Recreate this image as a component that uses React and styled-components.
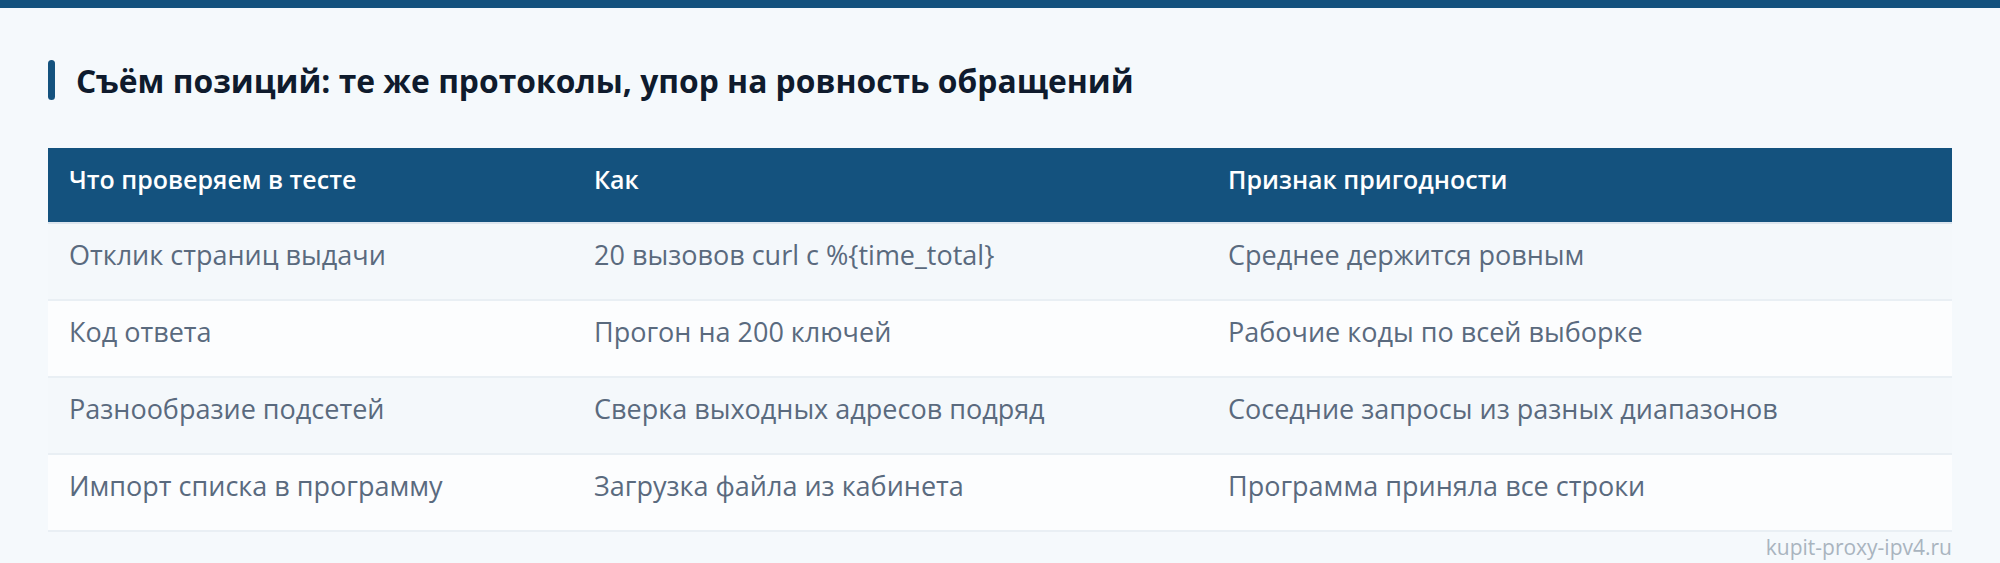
import styled, { createGlobalStyle } from "styled-components";

const GlobalStyle = createGlobalStyle`
  html, body {
    margin: 0;
    padding: 0;
    background-color: #f5f9fc;
    font-family: "Open Sans", "Noto Sans", sans-serif;
  }
`;

const rows = [
  ["Отклик страниц выдачи", "20 вызовов curl с %{time_total}", "Среднее держится ровным"],
  ["Код ответа", "Прогон на 200 ключей", "Рабочие коды по всей выборке"],
  ["Разнообразие подсетей", "Сверка выходных адресов подряд", "Соседние запросы из разных диапазонов"],
  ["Импорт списка в программу", "Загрузка файла из кабинета", "Программа приняла все строки"],
];

export default function App() {
  return (
    <>
      <GlobalStyle />
      <TopBar />
      <Page>
        <Heading>Съём позиций: те же протоколы, упор на ровность обращений</Heading>
        <Table>
          <colgroup>
            <col style={{ width: "525px" }} />
            <col style={{ width: "634px" }} />
            <col />
          </colgroup>
          <thead>
            <tr>
              <HeadCell>Что проверяем в тесте</HeadCell>
              <HeadCell>Как</HeadCell>
              <HeadCell>Признак пригодности</HeadCell>
            </tr>
          </thead>
          <tbody>
            {rows.map((row, i) => (
              <Row key={i} $odd={i % 2 === 0}>
                {row.map((cell, j) => (
                  <Cell key={j}>{cell}</Cell>
                ))}
              </Row>
            ))}
          </tbody>
        </Table>
        <Watermark>kupit-proxy-ipv4.ru</Watermark>
      </Page>
    </>
  );
}

const TopBar = styled.div`
  height: 8px;
  background-color: #14527e;
`;

const Page = styled.div`
  padding: 52px 48px 0;
  display: flex;
  flex-direction: column;
`;

const Heading = styled.h2`
  margin: 0 0 48px;
  height: 40px;
  display: flex;
  align-items: center;
  gap: 21px;
  font-size: 31.8px;
  font-weight: 700;
  color: #0f1b2d;
  & > span {
    padding-top: 2px;
  }
  &::before {
    content: "";
    flex: none;
    width: 7px;
    height: 40px;
    border-radius: 4px;
    background-color: #14527e;
  }
`;

const Table = styled.table`
  width: 100%;
  border-collapse: collapse;
  table-layout: fixed;
`;

const HeadCell = styled.th`
  height: 62px;
  padding: 0 21px 12px;
  text-align: left;
  font-size: 25px;
  font-weight: 600;
  color: #ffffff;
  background-color: #14527e;
  border-bottom: 2px solid #dce5ee;
`;

const Row = styled.tr`
  background-color: ${(p) => (p.$odd ? "#f4f8fb" : "#fcfdfe")};
  border-bottom: 2px solid #e9eff4;
`;

const Cell = styled.td`
  height: 61px;
  padding: 0 21px 14px;
  font-size: 27px;
  color: #5a6a7e;
`;

const Watermark = styled.div`
  align-self: flex-end;
  margin-top: 1px;
  font-size: 21px;
  color: #a9b4bf;
`;
